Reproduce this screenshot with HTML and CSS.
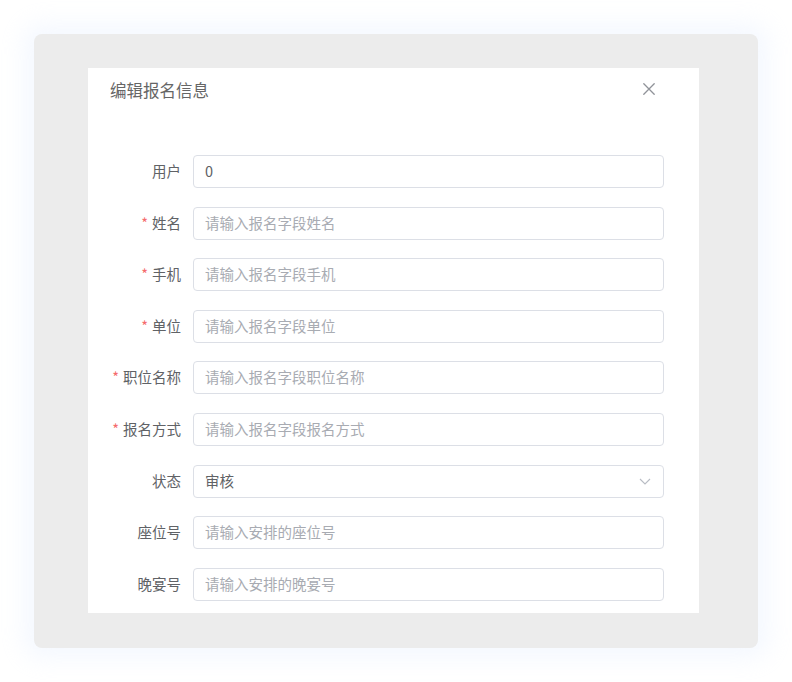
FILE: index.html
```html
<!DOCTYPE html>
<html lang="zh-CN">
<head>
<meta charset="utf-8">
<title>编辑报名信息</title>
<link rel="stylesheet" href="styles.css">
</head>
<body>
<div class="overlay">
  <div class="dialog">
    <div class="dialog-header">
      <span class="dialog-title">编辑报名信息</span>
      <button class="dialog-close" type="button" aria-label="关闭">
        <svg width="12" height="12" viewBox="0 0 12 12"><path d="M0.8 0.8 L11.2 11.2 M11.2 0.8 L0.8 11.2" stroke="#909399" stroke-width="1.3" fill="none" stroke-linecap="round"/></svg>
      </button>
    </div>
    <form class="form">
      <div class="form-item">
        <label class="form-label">用户</label>
        <div class="field"><input class="input" type="text" value="0"></div>
      </div>
      <div class="form-item">
        <label class="form-label is-required">姓名</label>
        <div class="field"><input class="input" type="text" placeholder="请输入报名字段姓名"></div>
      </div>
      <div class="form-item">
        <label class="form-label is-required">手机</label>
        <div class="field"><input class="input" type="text" placeholder="请输入报名字段手机"></div>
      </div>
      <div class="form-item">
        <label class="form-label is-required">单位</label>
        <div class="field"><input class="input" type="text" placeholder="请输入报名字段单位"></div>
      </div>
      <div class="form-item">
        <label class="form-label is-required">职位名称</label>
        <div class="field"><input class="input" type="text" placeholder="请输入报名字段职位名称"></div>
      </div>
      <div class="form-item">
        <label class="form-label is-required">报名方式</label>
        <div class="field"><input class="input" type="text" placeholder="请输入报名字段报名方式"></div>
      </div>
      <div class="form-item">
        <label class="form-label">状态</label>
        <div class="field select">
          <input class="input" type="text" value="审核" readonly>
          <svg class="select-arrow" width="12" height="7" viewBox="0 0 12 7"><path d="M1 1 L6 6 L11 1" stroke="#b8bcc4" stroke-width="1.1" fill="none"/></svg>
        </div>
      </div>
      <div class="form-item">
        <label class="form-label">座位号</label>
        <div class="field"><input class="input" type="text" placeholder="请输入安排的座位号"></div>
      </div>
      <div class="form-item">
        <label class="form-label">晚宴号</label>
        <div class="field"><input class="input" type="text" placeholder="请输入安排的晚宴号"></div>
      </div>
    </form>
  </div>
</div>
</body>
</html>
```

FILE: styles.css
```css
* {
  box-sizing: border-box;
}

html, body {
  margin: 0;
  background: #ffffff;
}

body {
  padding: 34px;
  font-family: "Noto Sans CJK SC", "Noto Sans", sans-serif;
}

/* grey backdrop holding the dialog */
.overlay {
  width: 724px;
  height: 614px;
  background: #ececec;
  border-radius: 8px;
  padding: 34px 0 0 54px;
  box-shadow: 0 0 24px 10px rgba(236, 244, 255, 0.6);
}

.dialog {
  width: 611px;
  height: 545px;
  background: #ffffff;
  overflow: hidden;
}

.dialog-header {
  display: flex;
  align-items: center;
  justify-content: space-between;
  padding: 10px 44px 10px 22px;
  height: 44px;
}

.dialog-title {
  font-size: 16.5px;
  line-height: 24px;
  color: #666666;
}

.dialog-close {
  border: 0;
  padding: 0;
  background: none;
  display: flex;
  width: 12px;
  height: 12px;
  margin-top: -2px;
}

.form {
  padding-top: 43px;
  display: flex;
  flex-direction: column;
  gap: 18.6px;
}

.form-item {
  display: flex;
  align-items: center;
  height: 33px;
}

.form-label {
  width: 105px;
  padding-right: 12px;
  padding-bottom: 2px;
  text-align: right;
  font-size: 14.5px;
  color: #606266;
  line-height: 31px;
}

.form-label.is-required::before {
  content: "*";
  color: #f56c6c;
  margin-right: 4px;
}

.field {
  width: 471px;
  height: 33px;
  position: relative;
}

.input {
  width: 100%;
  height: 33px;
  border: 1px solid #dcdfe6;
  border-radius: 4px;
  padding: 0 11px 2px;
  font-family: inherit;
  font-size: 14.5px;
  color: #606266;
  background: #ffffff;
  outline: none;
}

.input::placeholder {
  color: #a8abb2;
}

.select-arrow {
  position: absolute;
  right: 13px;
  top: 13px;
}
```
